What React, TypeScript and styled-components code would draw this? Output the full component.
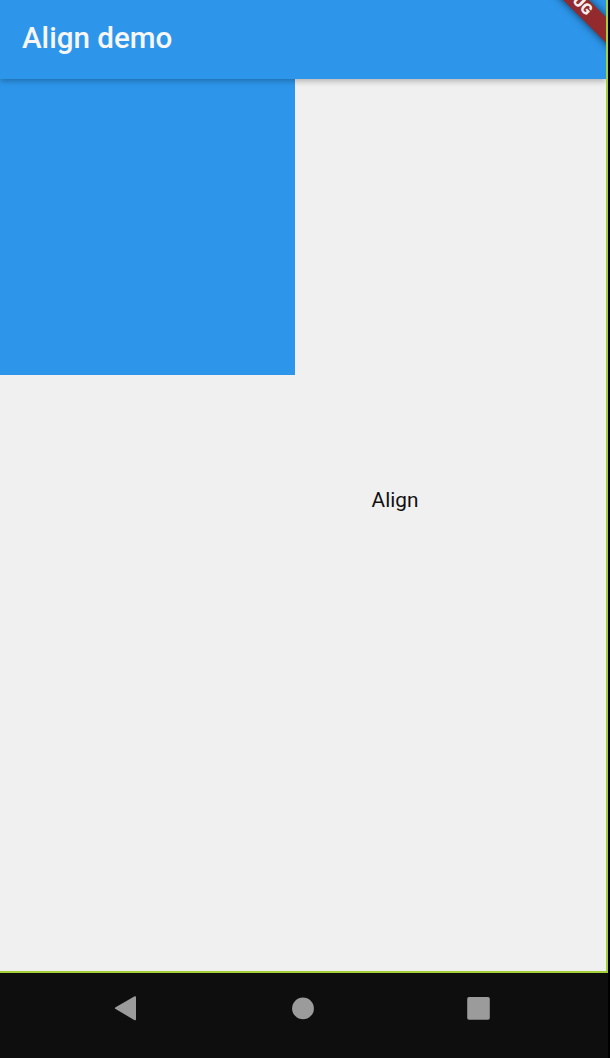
import React from 'react';
import styled, { createGlobalStyle } from 'styled-components';

const GlobalStyle = createGlobalStyle`
  body {
    margin: 0;
    background: #000;
    font-family: Roboto, 'Liberation Sans', sans-serif;
  }
`;

const Device = styled.div`
  width: 610px;
  height: 1058px;
  display: flex;
  flex-direction: column;
  background: #0e0e0e;
  box-sizing: border-box;
  border-right: 2px solid #000;
  overflow: hidden;
`;

const Screen = styled.div`
  position: relative;
  flex: 0 0 973px;
  box-sizing: border-box;
  display: flex;
  flex-direction: column;
  overflow: hidden;
  background: #f0f0f0;
  border-right: 2px solid #a4d037;
  border-bottom: 2px solid #a4d037;
`;

const AppBar = styled.header`
  position: relative;
  z-index: 1;
  height: 79px;
  flex-shrink: 0;
  box-sizing: border-box;
  padding: 0 22px 3px;
  display: flex;
  align-items: center;
  background: #2d96eb;
  box-shadow: 0 2px 6px rgba(0, 0, 0, 0.28);
`;

const Title = styled.h1`
  margin: 0;
  font-size: 29.6px;
  line-height: 34px;
  font-weight: 500;
  color: #f6f6f6;
`;

const Body = styled.main`
  flex: 1;
  display: flex;
  flex-direction: column;
  align-items: flex-start;
`;

const BlueBox = styled.div`
  width: 295px;
  height: 296px;
  background: #2d96eb;
`;

const Label = styled.span`
  margin: 113px 0 0 371.6px;
  font-size: 20.8px;
  line-height: 25px;
  color: #111;
`;

const DebugBanner = styled.div`
  position: absolute;
  z-index: 2;
  left: 492px;
  top: -13px;
  width: 160px;
  height: 17.7px;
  display: flex;
  align-items: center;
  justify-content: center;
  transform: rotate(45deg);
  background: #932a2d;
  box-shadow: 0 0 9px rgba(0, 0, 0, 0.65);
  color: #f5f0f0;
  font-size: 15.2px;
  line-height: 17px;
  font-weight: 900;
`;

const NavBar = styled.nav`
  flex: 1;
  display: flex;
  align-items: flex-start;
  padding: 23px 0 0 113px;
  gap: 152px;
`;

const NavIcon = styled.svg`
  width: 24px;
  height: 24px;
  overflow: visible;
  fill: #9b9b9b;
`;

export default function App() {
  return (
    <>
      <GlobalStyle />
      <Device>
        <Screen>
          <AppBar>
            <Title>Align demo</Title>
          </AppBar>
          <Body>
            <BlueBox />
            <Label>Align</Label>
          </Body>
          <DebugBanner>DEBUG</DebugBanner>
        </Screen>
        <NavBar>
          <NavIcon viewBox="0 0 24 24" aria-label="Back">
            <path d="M21.2 .4Q23 -.4 23 1.2V23.2Q23 24.8 21.2 24L2.6 13.1Q1.2 12.2 2.6 11.3Z" />
          </NavIcon>
          <NavIcon viewBox="0 0 24 24" aria-label="Home">
            <circle cx="14" cy="12.4" r="10.9" />
          </NavIcon>
          <NavIcon viewBox="0 0 24 24" aria-label="Overview">
            <rect x="2.2" y="1.1" width="22.6" height="22.7" rx="1.8" />
          </NavIcon>
        </NavBar>
      </Device>
    </>
  );
}
